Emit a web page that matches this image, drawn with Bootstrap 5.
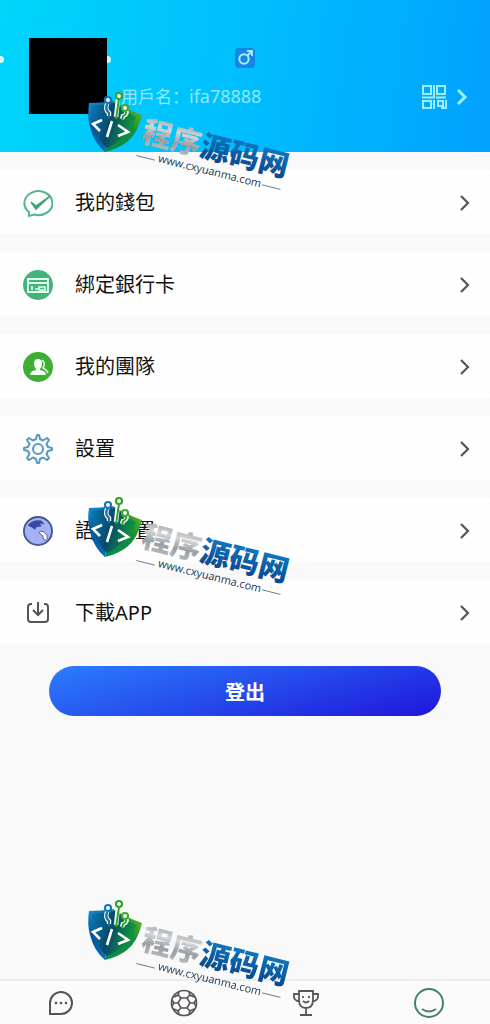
<!DOCTYPE html>
<html lang="zh-Hant">
<head>
<meta charset="utf-8">
<meta name="viewport" content="width=device-width, initial-scale=1">
<title>我的</title>
<link href="https://cdn.jsdelivr.net/npm/bootstrap@5.3.0/dist/css/bootstrap.min.css" rel="stylesheet">
<style>
body{font-family:"Noto Sans","Noto Sans CJK TC",sans-serif;background:#f9f9f9;color:#111}
.profile{height:152px;padding:0 22px 0 29px;background:linear-gradient(97deg,#00d5fb 0%,#00bdfd 52%,#00a1ff 100%)}
.avatar{width:78px;height:76px;margin-top:38px;background:#000}
.spark{position:absolute;top:56px;width:7px;height:7px;border-radius:50%;background:#d5f9ff}
.spark-l{left:-3px}.spark-r{left:104px}
.who{margin:48px 0 0 14px;color:#8fe9fb;line-height:24px}
.who-label{font-family:"Noto Sans CJK SC",sans-serif;font-size:17px}.who-id{font-size:18px}
.gender{margin-right:6px}
.qr{margin-top:84px;gap:9px;color:#9deffc}
.menu{padding-top:18px;gap:18px}
.entry{height:64px;padding:2px 19px 0 23px;background:#fefefe;color:#111;font-size:20px;box-shadow:0 0 4px #fefefe}
.entry-icon{width:30px;height:30px}
.entry-text{margin-left:22px}
.entry-next{width:12px;height:18px;color:#555}
.logout{width:80%;height:50px;margin-top:22px;font-size:20px;font-weight:700;color:#fff;background:linear-gradient(165deg,#2b78fa 5%,#2650ee 45%,#201bdc 95%)}
.tabs{height:45px;border-top:2px solid #ececec;background:#fbfbfb}
.stamp{position:absolute;left:85px;z-index:1040;pointer-events:none;overflow:visible}
.stamp-a{top:91px}.stamp-b{top:-2px}.stamp-c{top:-82px}
.stamp-name{font:900 30px "Noto Sans CJK SC",sans-serif}
.stamp-url{font:500 11px "Open Sans",sans-serif;fill:#173550}
</style>
</head>
<body class="min-vh-100">
<svg width="0" height="0" class="position-absolute" aria-hidden="true">
<defs>
<linearGradient id="shieldL" x1="0" y1="0" x2=".3" y2="1"><stop stop-color="#1690d4"/><stop offset=".5" stop-color="#075591"/><stop offset="1" stop-color="#0767bb"/></linearGradient>
<linearGradient id="shieldR" x1="1" y1="0" x2="0" y2="1"><stop stop-color="#7ac51c"/><stop offset=".4" stop-color="#148d3b"/><stop offset="1" stop-color="#098c50"/></linearGradient>
<linearGradient id="core" x1="0" y1="0" x2="1" y2=".3"><stop stop-color="#0877b7"/><stop offset=".5" stop-color="#074a69"/><stop offset="1" stop-color="#12973b"/></linearGradient>
<linearGradient id="steel" x1="0" y1="0" x2="0" y2="1"><stop stop-color="#85898c"/><stop offset=".4" stop-color="#d3d6d8"/><stop offset=".65" stop-color="#9a9ea2"/><stop offset="1" stop-color="#c8cacc"/></linearGradient>
<linearGradient id="azure" x1="0" y1="0" x2="0" y2="1"><stop stop-color="#1287d1"/><stop offset="1" stop-color="#073e83"/></linearGradient>
<symbol id="shield" viewBox="0 0 58 66">
<path d="M4 12Q16 12 28 10L20 61Q9 52 5 36Q2 25 4 12Z" fill="url(#shieldL)"/>
<path d="M28 10Q40 18 57 24Q53 42 42 51Q33 58 20 61Z" fill="url(#shieldR)"/>
<path d="M7 15Q18 14 29 12Q40 20 51 26Q45 47 22 57Q7 44 7 15Z" fill="url(#core)"/>
<path d="M23 11Q19 18 24 22V25M33 8L31 26M40 18Q44 23 38 25L37 28" fill="none" stroke="#fff" stroke-width="4.400"/>
<path d="M23 12Q19 18 24 22V27M34 8L31 28M40 19Q43 23 38 25L37 29" fill="none" stroke="#31a32d" stroke-width="2"/>
<path d="M23 12Q19 18 24 22V27" fill="none" stroke="#1676b6" stroke-width="2"/>
<circle cx="23" cy="9" r="3" fill="#fff" stroke="#1676b6" stroke-width="2.200"/>
<circle cx="34" cy="5" r="3" fill="#fff" stroke="#31a32d" stroke-width="2.200"/>
<circle cx="40" cy="17" r="3" fill="#fff" stroke="#3aaa33" stroke-width="2.200"/>
<path d="M17 29L8 33L15 40M27 30L22 46M33 34L43 41L33 45" fill="none" stroke="#fff" stroke-width="2.600"/>
</symbol>
<symbol id="next" viewBox="0 0 12 18"><path d="M2 2L9 9L2 16" fill="none" stroke="currentColor" stroke-width="2.2"/></symbol>
</defs>
</svg>

<header class="profile position-relative d-flex align-items-start">
<span class="spark spark-l"></span><span class="spark spark-r"></span>
<div class="avatar flex-shrink-0 position-relative"></div>
<div class="who d-flex flex-column">
<svg class="gender align-self-end mb-3" width="20" height="20" viewBox="0 0 20 20" role="img" aria-label="男"><rect width="20" height="20" rx="4" fill="#1686e2"/><circle cx="9" cy="11" r="4.7" fill="none" stroke="#a9edff" stroke-width="2"/><path d="M12 8L17 3M12 3H17V8" fill="none" stroke="#a9edff" stroke-width="1.8"/></svg>
<div class="d-flex text-nowrap"><span class="who-label" lang="zh-Hans">用戶名：</span><span class="who-id">ifa78888</span></div>
</div>
<a href="#" class="qr ms-auto d-flex align-items-center" aria-label="QR">
<svg width="26" height="26" viewBox="0 0 26 26" fill="none" stroke="currentColor" stroke-width="2"><rect x="2" y="2" width="8" height="8"/><rect x="16" y="2" width="8" height="8"/><rect x="2" y="17" width="8" height="7"/><rect x="17" y="17" width="5" height="5"/><path d="M1 13.500H13V1M15 13.500H25M13 16V25M25 16V24H20"/></svg>
<svg width="12" height="18" viewBox="0 0 12 18"><path d="M2 2L9 9L2 16" fill="none" stroke="currentColor" stroke-width="3"/></svg>
</a>
<svg class="stamp stamp-a" width="220" height="110" viewBox="0 0 220 110"><use href="#shield" width="58" height="66"/><g transform="translate(55 50) rotate(14)"><text class="stamp-name" fill="url(#steel)">程序<tspan fill="url(#azure)">源码网</tspan></text><text class="stamp-url" x="22" y="16">www.cxyuanma.com</text><path d="M0 15H19M129 13H148" stroke="#536b80" stroke-width=".8"/></g></svg>
</header>

<main>
<nav class="menu d-flex flex-column" aria-label="選單">
<a href="#" class="entry d-flex align-items-center text-decoration-none">
<svg class="entry-icon" viewBox="0 0 30 30" fill="none"><path d="M6 24A14 12 0 1 1 11 26.500L6 28Z" stroke="#55b58c" stroke-width="2"/><path d="M8 14L13 18L27 8L13 21Z" fill="#3fa57b" stroke="#3fa57b" stroke-width="1.500"/></svg>
<span class="entry-text">我的錢包</span><svg class="entry-next ms-auto"><use href="#next"/></svg></a>
<a href="#" class="entry d-flex align-items-center text-decoration-none">
<svg class="entry-icon" viewBox="0 0 30 30" fill="none"><circle cx="15" cy="15" r="15" fill="#43b27b"/><path d="M5 9H25V22H5ZM5 13H25" stroke="#e5fff2" stroke-width="1.800"/><path d="M9 16V20M12 19H15M16 17H22V20H16Z" stroke="#e5fff2" stroke-width="1.600"/></svg>
<span class="entry-text">綁定銀行卡</span><svg class="entry-next ms-auto"><use href="#next"/></svg></a>
<a href="#" class="entry d-flex align-items-center text-decoration-none">
<svg class="entry-icon" viewBox="0 0 30 30"><circle cx="15" cy="15" r="15" fill="#3eae34"/><path d="M11 11Q11 7 15 7T19 11Q19 15 17 17V18Q23 19 23 23H7Q7 19 13 18V17Q11 15 11 11Z" fill="#f4fff2"/><path d="M19 8Q23 11 20 16Q24 18 25 21" fill="none" stroke="#e2f8df" stroke-width="1.500"/></svg>
<span class="entry-text">我的團隊</span><svg class="entry-next ms-auto"><use href="#next"/></svg></a>
<a href="#" class="entry d-flex align-items-center text-decoration-none">
<svg class="entry-icon" viewBox="0 0 30 30" fill="none" stroke="#569bbb" stroke-width="2" stroke-linejoin="round"><path d="M13 5L14 1H16L17 5L20 6.500L24 4L26 6L23.500 10L25 13L29 14V16L25 17L23.500 20L26 24L24 26L20 23.500L17 25L16 29H14L13 25L10 23.500L6 26L4 24L6.500 20L5 17L1 16V14L5 13L6.500 10L4 6L6 4L10 6.500Z"/><circle cx="15" cy="15" r="5"/></svg>
<span class="entry-text">設置</span><svg class="entry-next ms-auto"><use href="#next"/></svg></a>
<div class="position-relative">
<a href="#" class="entry d-flex align-items-center text-decoration-none">
<svg class="entry-icon" viewBox="0 0 32 32"><circle cx="16" cy="16" r="15" fill="#a3b1f7" stroke="#4a548c" stroke-width="2"/><path d="M5 10Q11 3 20 5L23 9L18 8L20 11L14 12L13 15Q9 11 5 10Z" fill="#344aa3"/><path d="M17 18Q18 15 22 17Q27 20 26 24Q24 27 22 25L21 21Z" fill="#fff" stroke="#4a548c"/></svg>
<span class="entry-text">語言設置</span><svg class="entry-next ms-auto"><use href="#next"/></svg></a>
<svg class="stamp stamp-b" width="220" height="110" viewBox="0 0 220 110"><use href="#shield" width="58" height="66"/><g transform="translate(55 50) rotate(14)"><text class="stamp-name" fill="url(#steel)">程序<tspan fill="url(#azure)">源码网</tspan></text><text class="stamp-url" x="22" y="16">www.cxyuanma.com</text><path d="M0 15H19M129 13H148" stroke="#536b80" stroke-width=".8"/></g></svg>
</div>
<a href="#" class="entry d-flex align-items-center text-decoration-none">
<svg class="entry-icon" viewBox="0 0 30 30" fill="none" stroke="#555" stroke-width="2"><path d="M9 6H8Q5 6 5 9V21Q5 24 8 24H22Q25 24 25 21V9Q25 6 22 6H21M15 4V17M10 12L15 17L20 12"/></svg>
<span class="entry-text">下載APP</span><svg class="entry-next ms-auto"><use href="#next"/></svg></a>
</nav>
<button type="button" class="logout btn rounded-pill border-0 d-block mx-auto px-0 pt-2 pb-1">登出</button>
</main>

<nav class="tabs fixed-bottom" aria-label="主導航">
<div class="row g-0 h-100 text-center align-items-center">
<a href="#" class="col" aria-label="訊息"><svg width="26" height="26" viewBox="0 0 26 26"><path d="M2 24V13A11 11 0 1 1 13 24Z" fill="none" stroke="#555" stroke-width="2"/><g fill="#555"><circle cx="8" cy="13" r="1.300"/><circle cx="13" cy="13" r="1.300"/><circle cx="18" cy="13" r="1.300"/></g></svg></a>
<a href="#" class="col" aria-label="足球"><svg width="28" height="28" viewBox="0 0 28 28" fill="none" stroke="#5a5552" stroke-width="1.700"><circle cx="14" cy="14" r="12.500"/><path d="M11 9H17L20 14L17 19H11L8 14ZM11 9L8 6L9 3M17 9L20 6L19 3M20 14H24L26 11M24 14L26 17M17 19L20 22L19 25M11 19L8 22L9 25M8 14H4L2 11M4 14L2 17M8 6L4 8M20 6L24 8M20 22L24 20M8 22L4 20"/></svg></a>
<a href="#" class="col" aria-label="獎盃"><svg width="28" height="28" viewBox="0 0 28 28" fill="none" stroke="#5a5552" stroke-width="1.800"><path d="M7 2H21V11Q21 19 14 19T7 11ZM7 5H2V8Q2 11 8 13M21 5H26V8Q26 11 20 13M14 19V26M8 26H20"/><path d="M11 7V9M17 7V9M11 12Q14 15 17 12"/></svg></a>
<a href="#" class="col" aria-label="我的"><svg width="32" height="32" viewBox="0 0 32 32" fill="none" stroke="#45806a" stroke-width="2"><circle cx="16" cy="16" r="14"/><path d="M9 22Q16 27 23 22"/></svg></a>
</div>
<svg class="stamp stamp-c" width="220" height="110" viewBox="0 0 220 110"><use href="#shield" width="58" height="66"/><g transform="translate(55 50) rotate(14)"><text class="stamp-name" fill="url(#steel)">程序<tspan fill="url(#azure)">源码网</tspan></text><text class="stamp-url" x="22" y="16">www.cxyuanma.com</text><path d="M0 15H19M129 13H148" stroke="#536b80" stroke-width=".8"/></g></svg>
</nav>
<script src="https://cdn.jsdelivr.net/npm/bootstrap@5.3.0/dist/js/bootstrap.bundle.min.js"></script>
</body>
</html>
